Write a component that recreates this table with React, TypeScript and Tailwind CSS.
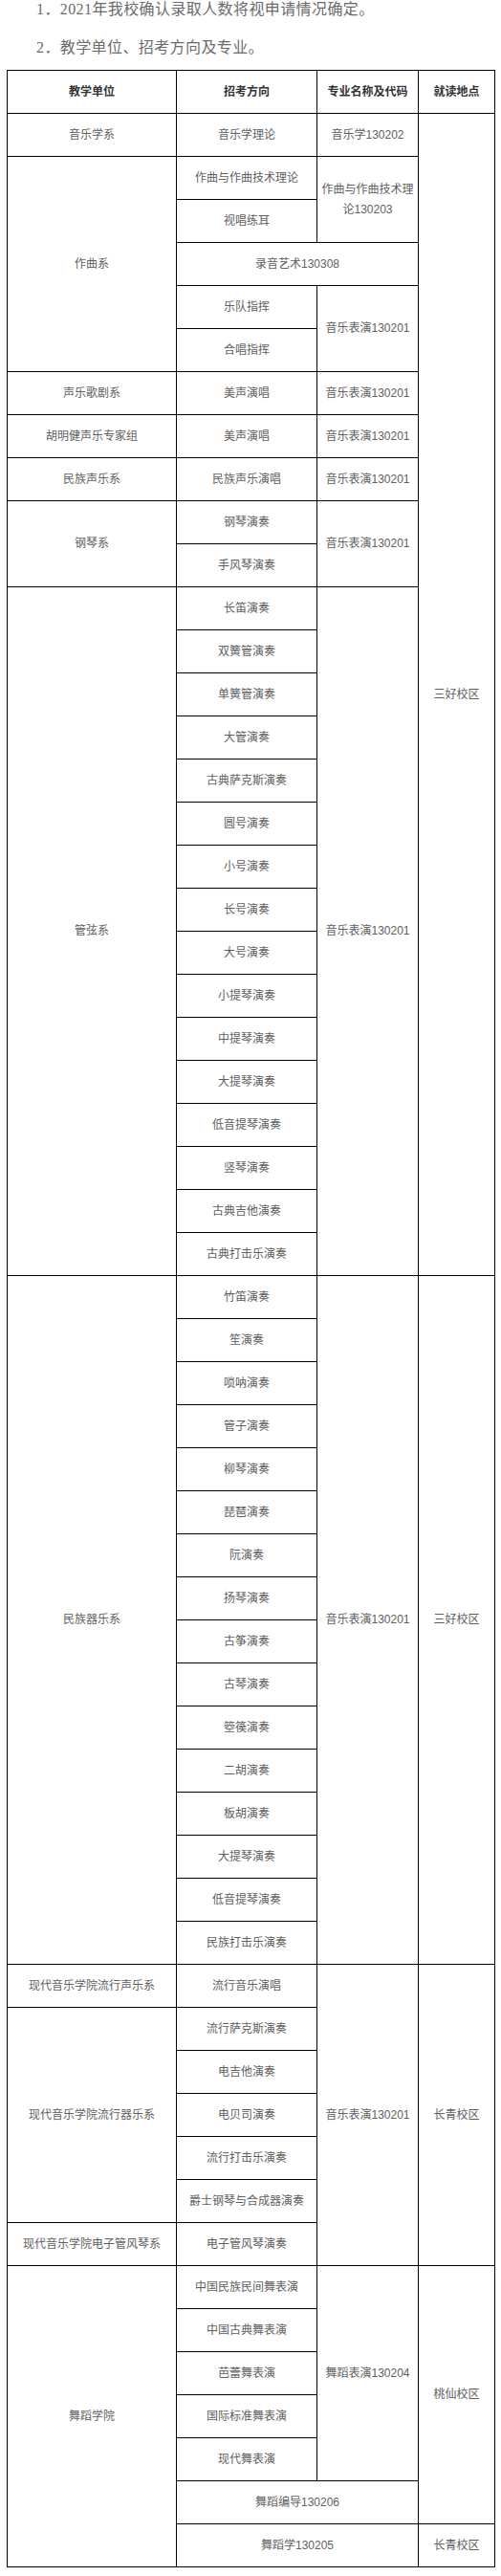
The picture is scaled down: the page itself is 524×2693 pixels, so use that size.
import React from "react";

type Cell = { t: string; rs?: number; cs?: number };

const rows: Cell[][] = [];
const push = (...cells: Cell[]) => rows.push(cells);

push({ t: "音乐学系" }, { t: "音乐学理论" }, { t: "音乐学130202" }, { t: "三好校区", rs: 27 });
push({ t: "作曲系", rs: 5 }, { t: "作曲与作曲技术理论" }, { t: "作曲与作曲技术理论130203", rs: 2 });
push({ t: "视唱练耳" });
push({ t: "录音艺术130308", cs: 2 });
push({ t: "乐队指挥" }, { t: "音乐表演130201", rs: 2 });
push({ t: "合唱指挥" });
push({ t: "声乐歌剧系" }, { t: "美声演唱" }, { t: "音乐表演130201" });
push({ t: "胡明健声乐专家组" }, { t: "美声演唱" }, { t: "音乐表演130201" });
push({ t: "民族声乐系" }, { t: "民族声乐演唱" }, { t: "音乐表演130201" });
push({ t: "钢琴系", rs: 2 }, { t: "钢琴演奏" }, { t: "音乐表演130201", rs: 2 });
push({ t: "手风琴演奏" });

const guanxian = [
  "长笛演奏",
  "双簧管演奏",
  "单簧管演奏",
  "大管演奏",
  "古典萨克斯演奏",
  "圆号演奏",
  "小号演奏",
  "长号演奏",
  "大号演奏",
  "小提琴演奏",
  "中提琴演奏",
  "大提琴演奏",
  "低音提琴演奏",
  "竖琴演奏",
  "古典吉他演奏",
  "古典打击乐演奏",
];
guanxian.forEach((x, i) => {
  if (i === 0) push({ t: "管弦系", rs: 16 }, { t: x }, { t: "音乐表演130201", rs: 16 });
  else push({ t: x });
});

const minzu = [
  "竹笛演奏",
  "笙演奏",
  "唢呐演奏",
  "管子演奏",
  "柳琴演奏",
  "琵琶演奏",
  "阮演奏",
  "扬琴演奏",
  "古筝演奏",
  "古琴演奏",
  "箜篌演奏",
  "二胡演奏",
  "板胡演奏",
  "大提琴演奏",
  "低音提琴演奏",
  "民族打击乐演奏",
];
minzu.forEach((x, i) => {
  if (i === 0)
    push(
      { t: "民族器乐系", rs: 16 },
      { t: x },
      { t: "音乐表演130201", rs: 16 },
      { t: "三好校区", rs: 16 }
    );
  else push({ t: x });
});

push(
  { t: "现代音乐学院流行声乐系" },
  { t: "流行音乐演唱" },
  { t: "音乐表演130201", rs: 7 },
  { t: "长青校区", rs: 7 }
);
const liuxing = ["流行萨克斯演奏", "电吉他演奏", "电贝司演奏", "流行打击乐演奏", "爵士钢琴与合成器演奏"];
liuxing.forEach((x, i) => {
  if (i === 0) push({ t: "现代音乐学院流行器乐系", rs: 5 }, { t: x });
  else push({ t: x });
});
push({ t: "现代音乐学院电子管风琴系" }, { t: "电子管风琴演奏" });

push(
  { t: "舞蹈学院", rs: 7 },
  { t: "中国民族民间舞表演" },
  { t: "舞蹈表演130204", rs: 5 },
  { t: "桃仙校区", rs: 6 }
);
push({ t: "中国古典舞表演" });
push({ t: "芭蕾舞表演" });
push({ t: "国际标准舞表演" });
push({ t: "现代舞表演" });
push({ t: "舞蹈编导130206", cs: 2 });
push({ t: "舞蹈学130205", cs: 2 }, { t: "长青校区" });

const fontStack = "'Liberation Serif', 'Noto Sans CJK SC', serif";
const cellFont = "'Liberation Sans', 'Noto Sans CJK SC', sans-serif";

export default function App() {
  return (
    <div className="w-[524px] bg-white pb-[10px]">
      <div className="text-[16px] text-[#6b6b6b]" style={{ fontFamily: fontStack }}>
        <p className="pl-[38px] leading-[20px] tracking-[0.4px]">1．2021年我校确认录取人数将视申请情况确定。</p>
        <p className="mt-[20px] pl-[38px] leading-[20px] tracking-[0.4px]">2．教学单位、招考方向及专业。</p>
      </div>
      <table
        className="mt-[13px] ml-[7px] w-[510px] table-fixed border-collapse border border-black"
        style={{ fontFamily: cellFont }}
      >
        <colgroup>
          <col className="w-[177px]" />
          <col className="w-[147px]" />
          <col className="w-[106px]" />
          <col className="w-[80px]" />
        </colgroup>
        <thead>
          <tr className="h-[45px]">
            {["教学单位", "招考方向", "专业名称及代码", "就读地点"].map((h) => (
              <th
                key={h}
                className="border border-black px-[3px] text-center align-middle text-[12px] font-bold text-[#333333]"
              >
                {h}
              </th>
            ))}
          </tr>
        </thead>
        <tbody>
          {rows.map((r, i) => (
            <tr key={i} className="h-[45px]">
              {r.map((c, j) => (
                <td
                  key={j}
                  rowSpan={c.rs}
                  colSpan={c.cs}
                  className="border border-black px-[3px] text-center align-middle text-[12px] leading-[21px] text-[#5e5e5e]"
                >
                  {c.t}
                </td>
              ))}
            </tr>
          ))}
        </tbody>
      </table>
    </div>
  );
}
